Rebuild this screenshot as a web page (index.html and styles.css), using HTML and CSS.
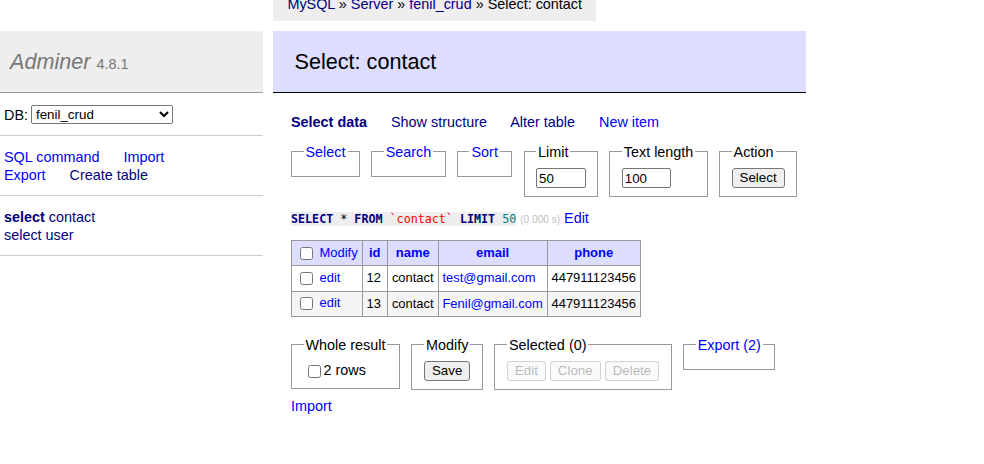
FILE: index.html
```html
<!DOCTYPE html>
<html lang="en">
<head>
<meta charset="utf-8">
<title>Select: contact - Adminer</title>
<link rel="stylesheet" href="styles.css">
</head>
<body>
<div class="breadcrumb"><a class="v" href="#">MySQL</a> » <a class="v" href="#">Server</a> » <a class="v" href="#">fenil_crud</a> » Select: contact</div>
<div class="layout">
  <div class="menu">
    <h1><a class="h1link" href="#">Adminer</a> <span class="version">4.8.1</span></h1>
    <div class="sec db"><label>DB:</label><select class="dbsel"><option>fenil_crud</option></select></div>
    <p class="sec mlinks"><a href="#">SQL command</a> <a href="#">Import</a><br><a href="#">Export</a> <a class="v" href="#">Create table</a></p>
    <ul class="sec tables">
      <li><a class="v active" href="#">select</a> <a class="v" href="#">contact</a></li>
      <li><a class="v" href="#">select</a> <a class="v" href="#">user</a></li>
    </ul>
  </div>
  <div class="content">
    <h2>Select: contact</h2>
    <div class="main">
      <p class="links"><a class="v active" href="#">Select data</a> <a class="v" href="#">Show structure</a> <a class="v" href="#">Alter table</a> <a href="#">New item</a></p>
      <form class="fields">
        <fieldset><legend><a href="#">Select</a></legend></fieldset>
        <fieldset><legend><a href="#">Search</a></legend></fieldset>
        <fieldset><legend><a href="#">Sort</a></legend></fieldset>
        <fieldset><legend>Limit</legend><input class="size" type="text" value="50"></fieldset>
        <fieldset><legend>Text length</legend><input class="size" type="text" value="100"></fieldset>
        <fieldset><legend>Action</legend><button class="btn" type="button">Select</button></fieldset>
      </form>
      <p class="sql"><code><span class="kw">SELECT</span> * <span class="kw">FROM</span> <span class="bac">`contact`</span> <span class="kw">LIMIT</span> <span class="num">50</span></code> <span class="time">(0.000 s)</span> <a href="#">Edit</a></p>
      <table class="grid">
        <thead>
          <tr><td><input type="checkbox"> <a href="#">Modify</a></td><th><a href="#">id</a></th><th><a href="#">name</a></th><th><a href="#">email</a></th><th><a href="#">phone</a></th></tr>
        </thead>
        <tbody>
          <tr><td><input type="checkbox"> <a href="#">edit</a></td><td>12</td><td>contact</td><td><a href="#">test@gmail.com</a></td><td>447911123456</td></tr>
          <tr><td><input type="checkbox"> <a href="#">edit</a></td><td>13</td><td>contact</td><td><a href="#">Fenil@gmail.com</a></td><td>447911123456</td></tr>
        </tbody>
      </table>
      <div class="footer">
        <fieldset><legend>Whole result</legend><label class="rows"><input type="checkbox">2 rows</label></fieldset>
        <fieldset><legend>Modify</legend><button class="btn" type="button">Save</button></fieldset>
        <fieldset><legend>Selected (0)</legend><button class="btn" type="button" disabled>Edit</button> <button class="btn" type="button" disabled>Clone</button> <button class="btn" type="button" disabled>Delete</button></fieldset>
        <fieldset><legend><a href="#">Export (2)</a></legend></fieldset>
      </div>
      <div class="import"><a href="#">Import</a></div>
    </div>
  </div>
</div>
</body>
</html>
```

FILE: styles.css
```css
body {
  margin: 0;
  color: #000;
  background: #fff;
  font: 14.4px/18px "Liberation Sans", Arial, sans-serif;
}
a { color: #00f; text-decoration: none; }
a.v { color: #000080; }
.active { font-weight: bold; }

.breadcrumb {
  margin: -8px 0 10px 273px;
  width: max-content;
  height: 29px;
  line-height: 25.5px;
  padding: 0 14.4px;
  background: #eee;
  white-space: nowrap;
}

.layout { display: flex; align-items: flex-start; }
.menu { width: 263px; flex: none; }

h1 {
  margin: 0;
  padding: 16.5px 10px 17.5px;
  font-size: 21.6px;
  line-height: 27px;
  font-weight: normal;
  background: #eee;
  border-bottom: 1px solid #999;
  color: #777;
}
.h1link { color: #777; font-style: italic; }
.version { font-size: 14.5px; line-height: 1; color: #777; }

.sec {
  margin: 0;
  padding: 12px 4px 11px;
  border-bottom: 1px solid #ccc;
  line-height: 18px;
}
.db {
  display: flex;
  align-items: center;
  gap: 3px;
  height: 19px;
  padding: 12px 4px 11px;
}
.dbsel {
  width: 142px;
  height: 19px;
  font: 13.33px "Liberation Sans", Arial, sans-serif;
  margin: 0;
}
.mlinks a { margin-right: 20px; white-space: nowrap; }
.tables { list-style: none; }

.content { margin-left: 10px; width: 533px; flex: none; }
h2 {
  margin: 0;
  padding: 16.5px 21.6px 17.5px;
  font-size: 21.6px;
  line-height: 27px;
  font-weight: normal;
  background: #ddf;
  border-bottom: 1px solid #000;
}
.main { padding-left: 18px; }
.links { margin: 20px 0 0; }
.links a { margin-right: 20px; white-space: nowrap; }

.fields { display: flex; gap: 11.2px; margin: 0; align-items: flex-start; }
fieldset {
  margin: 11.5px 0 0;
  padding: 7.5px 11.5px;
  border: 1px solid #999;
  min-width: 0;
}
legend { padding: 0 2px; }

.size {
  box-sizing: border-box;
  width: 49.5px;
  height: 20px;
  padding: 1px 2px;
  margin: 0;
  border: 1px solid #767676;
  border-radius: 2px;
  font: 13.33px "Liberation Sans", Arial, sans-serif;
  vertical-align: middle;
}
.btn {
  box-sizing: border-box;
  height: 20px;
  padding: 0 7px;
  margin: 0;
  border: 1px solid #767676;
  border-radius: 3px;
  background: #efefef;
  color: #000;
  font: 13.33px/16px "Liberation Sans", Arial, sans-serif;
  vertical-align: middle;
}
.btn:disabled {
  color: rgba(16, 16, 16, 0.3);
  border-color: rgba(118, 118, 118, 0.3);
  background: rgba(239, 239, 239, 0.3);
}
input[type="checkbox"] {
  width: 13px;
  height: 13px;
  margin: 3px 3px 3px 4px;
  vertical-align: middle;
}

.sql { margin: 12px 0 0; }
code {
  font: 11.7px "DejaVu Sans Mono", monospace;
  background: #eee;
}
.kw { color: #000080; font-weight: bold; }
.bac { color: red; }
.num { color: #007f7f; }
.time { color: silver; font-size: 10.08px; }

.grid {
  border-collapse: collapse;
  font-size: 12.96px;
  line-height: 16.2px;
  margin-top: 11.5px;
}
.grid td, .grid th {
  border: 1px solid #999;
  padding: 2.6px 3.9px;
  white-space: nowrap;
  text-align: left;
}
.grid thead td, .grid thead th { background: #ddf; }
.grid thead th { text-align: center; padding: 2.6px 6.48px; }
.grid tbody tr:nth-child(2n) { background: #f5f5f5; }

.footer {
  display: flex;
  gap: 11.5px;
  align-items: flex-start;
  margin-top: 19px;
  padding-bottom: 7.2px;
}
.footer fieldset { margin-top: 0; }
.rows { white-space: nowrap; }
.import { line-height: 18px; }
```
